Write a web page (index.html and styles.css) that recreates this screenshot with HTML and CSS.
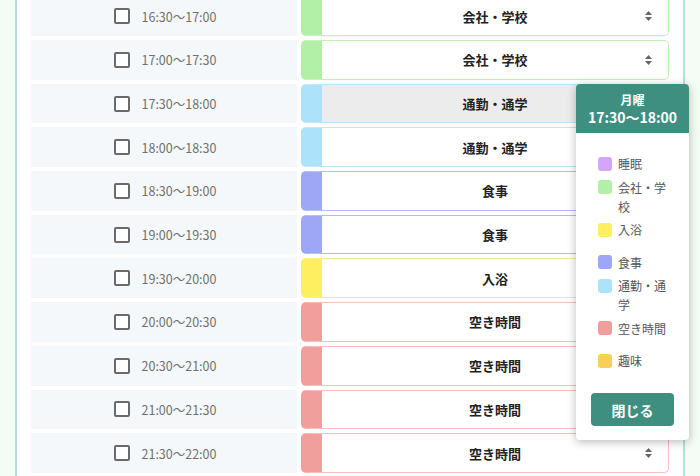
FILE: index.html
```html
<!DOCTYPE html>
<html lang="ja">
<head>
<meta charset="utf-8">
<link rel="stylesheet" href="styles.css">
</head>
<body>
<div class="page">
  <div class="panel">
    <div class="list">
      <div class="row"><div class="time"><span class="cb"></span><span class="tt">16:30〜17:00</span></div><div class="sel c-work"><span class="label">会社・学校</span><svg class="arrow" viewBox="0 0 7 10" width="7" height="10"><path d="M3.5 0 L7 4 L0 4 Z M0 6 L7 6 L3.5 10 Z"/></svg></div></div>
      <div class="row"><div class="time"><span class="cb"></span><span class="tt">17:00〜17:30</span></div><div class="sel c-work"><span class="label">会社・学校</span><svg class="arrow" viewBox="0 0 7 10" width="7" height="10"><path d="M3.5 0 L7 4 L0 4 Z M0 6 L7 6 L3.5 10 Z"/></svg></div></div>
      <div class="row"><div class="time"><span class="cb"></span><span class="tt">17:30〜18:00</span></div><div class="sel c-commute focus"><span class="label">通勤・通学</span><svg class="arrow" viewBox="0 0 7 10" width="7" height="10"><path d="M3.5 0 L7 4 L0 4 Z M0 6 L7 6 L3.5 10 Z"/></svg></div></div>
      <div class="row"><div class="time"><span class="cb"></span><span class="tt">18:00〜18:30</span></div><div class="sel c-commute"><span class="label">通勤・通学</span><svg class="arrow" viewBox="0 0 7 10" width="7" height="10"><path d="M3.5 0 L7 4 L0 4 Z M0 6 L7 6 L3.5 10 Z"/></svg></div></div>
      <div class="row"><div class="time"><span class="cb"></span><span class="tt">18:30〜19:00</span></div><div class="sel c-meal"><span class="label">食事</span><svg class="arrow" viewBox="0 0 7 10" width="7" height="10"><path d="M3.5 0 L7 4 L0 4 Z M0 6 L7 6 L3.5 10 Z"/></svg></div></div>
      <div class="row"><div class="time"><span class="cb"></span><span class="tt">19:00〜19:30</span></div><div class="sel c-meal"><span class="label">食事</span><svg class="arrow" viewBox="0 0 7 10" width="7" height="10"><path d="M3.5 0 L7 4 L0 4 Z M0 6 L7 6 L3.5 10 Z"/></svg></div></div>
      <div class="row"><div class="time"><span class="cb"></span><span class="tt">19:30〜20:00</span></div><div class="sel c-bath"><span class="label">入浴</span><svg class="arrow" viewBox="0 0 7 10" width="7" height="10"><path d="M3.5 0 L7 4 L0 4 Z M0 6 L7 6 L3.5 10 Z"/></svg></div></div>
      <div class="row"><div class="time"><span class="cb"></span><span class="tt">20:00〜20:30</span></div><div class="sel c-free"><span class="label">空き時間</span><svg class="arrow" viewBox="0 0 7 10" width="7" height="10"><path d="M3.5 0 L7 4 L0 4 Z M0 6 L7 6 L3.5 10 Z"/></svg></div></div>
      <div class="row"><div class="time"><span class="cb"></span><span class="tt">20:30〜21:00</span></div><div class="sel c-free"><span class="label">空き時間</span><svg class="arrow" viewBox="0 0 7 10" width="7" height="10"><path d="M3.5 0 L7 4 L0 4 Z M0 6 L7 6 L3.5 10 Z"/></svg></div></div>
      <div class="row"><div class="time"><span class="cb"></span><span class="tt">21:00〜21:30</span></div><div class="sel c-free"><span class="label">空き時間</span><svg class="arrow" viewBox="0 0 7 10" width="7" height="10"><path d="M3.5 0 L7 4 L0 4 Z M0 6 L7 6 L3.5 10 Z"/></svg></div></div>
      <div class="row"><div class="time"><span class="cb"></span><span class="tt">21:30〜22:00</span></div><div class="sel c-free"><span class="label">空き時間</span><svg class="arrow" viewBox="0 0 7 10" width="7" height="10"><path d="M3.5 0 L7 4 L0 4 Z M0 6 L7 6 L3.5 10 Z"/></svg></div></div>
    </div>
  </div>
  <div class="popup">
    <div class="pop-head">
      <div class="pop-day">月曜</div>
      <div class="pop-time">17:30〜18:00</div>
    </div>
    <div class="pop-body">
      <div class="legend">
        <div class="group">
          <div class="item"><span class="sw s-sleep"></span><span class="ltext">睡眠</span></div>
          <div class="item"><span class="sw s-work"></span><span class="ltext">会社・学校</span></div>
          <div class="item"><span class="sw s-bath"></span><span class="ltext">入浴</span></div>
        </div>
        <div class="group">
          <div class="item"><span class="sw s-meal"></span><span class="ltext">食事</span></div>
          <div class="item"><span class="sw s-commute"></span><span class="ltext">通勤・通学</span></div>
          <div class="item"><span class="sw s-free"></span><span class="ltext">空き時間</span></div>
        </div>
        <div class="group">
          <div class="item"><span class="sw s-hobby"></span><span class="ltext">趣味</span></div>
        </div>
      </div>
      <button class="close">閉じる</button>
    </div>
  </div>
</div>
</body>
</html>
```
FILE: styles.css
```css
html, body {
  margin: 0;
  padding: 0;
  height: 476px;
  overflow: hidden;
}
body {
  background: #f4fcf6;
  font-family: "Noto Sans CJK JP", "Noto Sans", sans-serif;
}
.page {
  position: relative;
  width: 700px;
  height: 476px;
  overflow: hidden;
}
.panel {
  margin-left: 15px;
  width: 670px;
  height: 520px;
  background: #ffffff;
  border-left: 2px solid #b3e0da;
  border-right: 2px solid #b3e0da;
  padding: 0 14px;
  box-sizing: border-box;
}
.list {
  display: flex;
  flex-direction: column;
  gap: 4px;
  margin-top: -3.7px;
}
.row {
  display: grid;
  grid-template-columns: 266px 368px;
  column-gap: 4px;
  height: 39.7px;
}
.time {
  background: #f5f8fa;
  display: flex;
  align-items: center;
  justify-content: center;
  gap: 12px;
  padding-left: 2px;
}
.cb {
  width: 16px;
  height: 16px;
  box-sizing: border-box;
  border: 2px solid #6a6a6a;
  border-radius: 2px;
  background: #fff;
}
.tt {
  font-size: 12.5px;
  color: #707070;
  font-family: "Noto Sans CJK JP", sans-serif;
}
.sel {
  display: grid;
  grid-template-columns: 24px 1fr 24px;
  align-items: center;
  background: #fff;
  border: 1px solid;
  border-left-width: 21px;
  border-radius: 5px;
  box-sizing: border-box;
}
.sel.focus { background: #ececec; }
.label {
  grid-column: 2;
  text-align: center;
  font-size: 13px;
  font-weight: bold;
  color: #222;
}
.arrow {
  grid-column: 3;
  fill: #666;
  margin-left: 1px;
}
.c-work { border-color: #bdf3b3; border-left-color: #b3f0a7; }
.c-commute { border-color: #b9e6fb; border-left-color: #ade2fb; }
.c-meal { border-color: #b3b9f6; border-left-color: #9ea7f5; }
.c-bath { border-color: #fbea82; border-left-color: #fdef5f; }
.c-free { border-color: #f7bebd; border-left-color: #f19f9c; }

.popup {
  position: absolute;
  left: 576px;
  top: 84px;
  width: 113px;
  height: 356px;
  background: #fff;
  border-radius: 4px;
  box-shadow: 0 2px 10px rgba(0,0,0,0.28);
  overflow: hidden;
  display: flex;
  flex-direction: column;
}
.pop-head {
  background: #3f8f80;
  color: #fff;
  text-align: center;
  font-weight: bold;
  height: 49px;
  display: flex;
  flex-direction: column;
  justify-content: center;
}
.pop-day { font-size: 12px; line-height: 17px; }
.pop-time { font-size: 14px; line-height: 19px; }
.pop-body {
  padding: 21px 15px 14px 15px;
  display: flex;
  flex-direction: column;
  flex: 1;
}
.legend {
  padding-left: 7px;
  display: flex;
  flex-direction: column;
  gap: 13.5px;
}
.group {
  display: flex;
  flex-direction: column;
  gap: 4.5px;
}
.item {
  display: flex;
  align-items: flex-start;
  gap: 6px;
}
.sw {
  width: 14px;
  height: 14px;
  border-radius: 3px;
  margin-top: 2.5px;
  flex: none;
}
.ltext {
  font-size: 12px;
  line-height: 19px;
  color: #555;
  width: 50px;
}
.s-sleep { background: #d5a6f6; }
.s-work { background: #b3f0a7; }
.s-bath { background: #fdef5f; }
.s-meal { background: #9ea7f5; }
.s-commute { background: #ade2fb; }
.s-free { background: #f19f9c; }
.s-hobby { background: #f8cf5b; }
.close {
  margin-top: auto;
  height: 33px;
  border: none;
  border-radius: 4px;
  background: #3f8f80;
  color: #fff;
  font-family: "Noto Sans CJK JP", sans-serif;
  font-size: 14px;
  font-weight: bold;
  padding: 0;
}
```
